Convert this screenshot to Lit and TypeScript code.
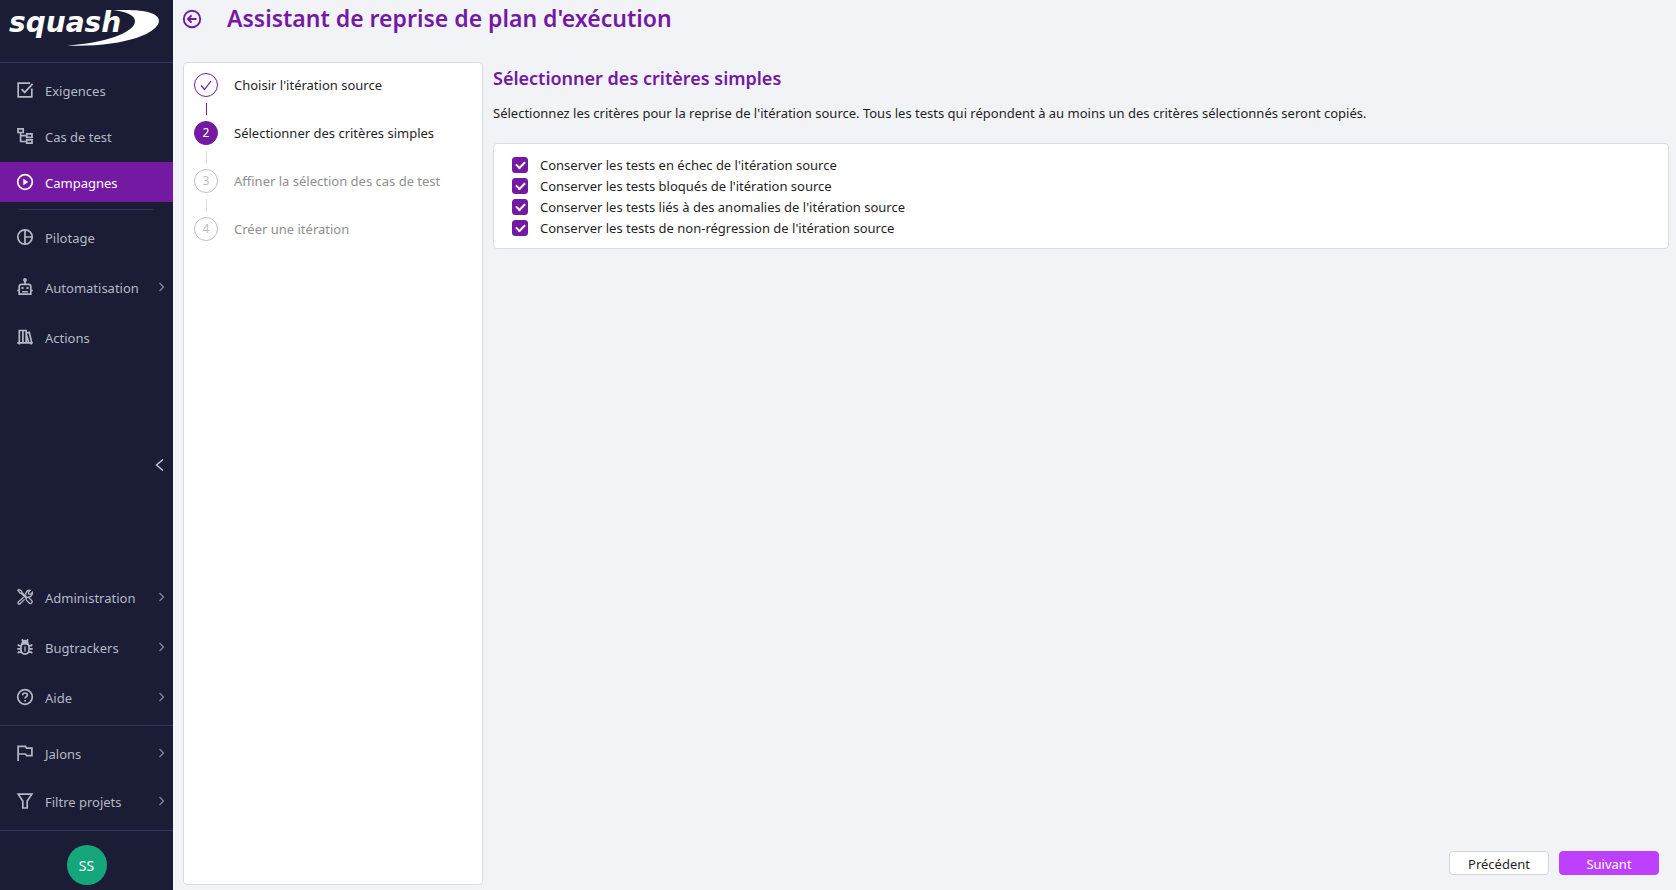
import { LitElement, html, css, svg, nothing, TemplateResult } from "lit";
import { customElement, property, state } from "lit/decorators.js";

const icons: Record<string, TemplateResult> = {
  check: svg`<path d="M13.2 1.2H1.2V14.8H14.8V6.5M4.6 7.2l3 3.2L15.6 1.8"/>`,
  tree: svg`<path d="M1 .9h5.2v3.6H1zM9.700 5.900H15v3.400H9.700zM9.700 11.800H15v3.400H9.700zM3.600 4.500v9h6M3.600 7.700h6"/>`,
  play: svg`<circle cx="8" cy="8" r="7.300"/><path d="M6.300 4.800v6.400L11.300 8z" fill="currentColor" stroke="none"/>`,
  pie: svg`<circle cx="8" cy="8" r="7.200"/><path d="M8 .8v14.400M8 8h7.200"/>`,
  robot: svg`<path d="M8 1v4.500M4.500 5.300h7a2.300 2.300 0 0 1 2.300 2.300v7.600H2.200V7.600a2.300 2.300 0 0 1 2.300-2.300zM2 11.500H.2M14 11.500h1.800"/><circle cx="8" cy="1" r="1.100" fill="currentColor"/><path d="M4.500 8h2v2h-2zM9.500 8h2v2h-2zM5.200 12h5.600v1.500H5.200z" fill="currentColor" stroke="none"/>`,
  books: svg`<path d="M2.300 15.500V1.500h3.600v12.300M5.900 1.500h3.300v12.300M.2 13.800h15.600M9.200 4.200l3.100-.8 2.400 10.200M9.500 6l2.200 7.600M14 13.800v1.700"/>`,
  tools: svg`<g stroke-width="1.300"><path d="M.8 1.200L2 .4l2.400 1.500.5 1.600 5 5c.9-.3 1.700-.1 2.400.6l2.400 2.400c1.600 1.600-.9 4.200-2.500 2.500L9.800 11.600c-.7-.7-.9-1.500-.6-2.300l-5-5-1.600-.6z"/><path d="M8.800 6.300C8.200 3.300 10.300.8 13.300 1.300L11.300 3.400l.4 1.600 1.600.4 2.100-2.100c.4 2.900-1.700 4.700-4 4.400M6.700 8.300L1.500 12.700c-1.600 1.500.4 3.500 1.800 1.800L7.600 10.400"/></g>`,
  bug: svg`<path d="M4 8c0-2.300 1.500-3.300 4-3.300s4 1 4 3.300v2.800c0 2.600-1.500 4.300-4 4.300s-4-1.700-4-4.300zM.3 9.800H4M12 9.800h3.700M.9 5.400l.8 1.200H4M15.100 5.400l-.8 1.200H12M.9 14.400l.8-1.300h2.700M15.100 14.400l-.8-1.300h-2.700"/><path d="M8 7.500v5" stroke-width="1.300"/><path d="M5.200 4.400a2.800 2.800 0 0 1 5.600 0zM4.800.4l1.700 1.800M11.200.4L9.500 2.200" fill="currentColor"/>`,
  help: svg`<circle cx="8" cy="8" r="7.300"/><path d="M5.700 6.300c0-3 4.700-3 4.700-.2 0 1.700-2.300 1.700-2.300 3.500M8.100 10.900v1.600"/>`,
  flag: svg`<path d="M1.100 16V1.300h7.400l1 1.800h5.400v7.600H9.600L8.500 9H1.100"/>`,
  filter: svg`<path d="M1.200 1.200h13.600L10.200 8v7H5.800V8z"/>`,
  back: svg`<circle cx="8" cy="8" r="7.300"/><path d="M12 8H4.500M7.600 4.800L4.400 8l3.200 3.200"/>`,
};

@customElement("sq-icon")
class SqIcon extends LitElement {
  @property() name = "";
  static styles = css`
    :host { display: inline-flex; flex: none; width: 16px; height: 16px; }
    svg { width: 100%; height: 100%; overflow: visible; fill: none; stroke: currentColor; stroke-width: 1.700; }
  `;
  render() {
    return html`<svg viewBox="0 0 16 16" aria-hidden="true">${icons[this.name]}</svg>`;
  }
}

interface NavItem { icon: string; label: string; more?: boolean; active?: boolean }

@customElement("sq-sidebar")
class SqSidebar extends LitElement {
  static styles = css`
    :host {
      display: flex; flex-direction: column; flex: none; box-sizing: border-box;
      width: 173px; min-height: 100vh; background: #1a1d35; color: #b5b8c6;
    }
    .logo { display: block; height: 62px; border-bottom: 1px solid #323759; }
    .logo svg { display: block; width: 173px; height: 62px; }
    .word { font: italic bold 28px "DejaVu Sans", sans-serif; }
    nav { display: flex; flex-direction: column; }
    .main { gap: 6px; padding-top: 7px; }
    .tools { gap: 10px; padding-top: 7px; }
    .admin { gap: 10px; padding-bottom: 8px; }
    .filters { gap: 8px; padding: 7px 0 9px; border: solid #323759; border-width: 1px 0; }
    .item {
      display: flex; align-items: center; box-sizing: border-box; height: 40px;
      padding: 0 8px 0 17px; gap: 12px; color: inherit; text-decoration: none;
    }
    .item.active { background: #7419a2; color: #fff; }
    .label { flex: 1; padding-top: 2px; }
    .chevron { width: 7px; height: 10px; fill: none; stroke: currentColor; stroke-width: 1.200; opacity: 0.700; }
    .rule { width: 134px; height: 1px; margin: 7px 0 0 19px; border: 0; background: #323759; }
    .middle { display: flex; flex: 1; align-items: center; justify-content: flex-end; padding-bottom: 4px; }
    .collapse { display: flex; padding: 8px 9px; border: 0; background: none; color: #c9cbd6; }
    .collapse svg { width: 9px; height: 12px; fill: none; stroke: currentColor; stroke-width: 1.400; }
    .avatar {
      align-self: center; width: 40px; height: 40px; margin: 14px 0 5px; padding: 2px 0 0;
      border: 0; border-radius: 50%; background: #16a67c; color: #fff; font: inherit; font-size: 14px;
    }
  `;
  private item(i: NavItem) {
    return html`<a class="item ${i.active ? "active" : ""}" href="#">
      <sq-icon name=${i.icon}></sq-icon><span class="label">${i.label}</span>
      ${i.more ? html`<svg class="chevron" viewBox="0 0 7 10" aria-hidden="true"><path d="M1.500 1l4 4-4 4"/></svg>` : nothing}
    </a>`;
  }
  render() {
    return html`
      <a class="logo" href="#" aria-label="squash">
        <svg viewBox="0 0 173 62">
          <text class="word" x="9" y="32" fill="#fff">squash</text>
          <path fill="#fff" d="M113 10.200C142 8.800 159 12 159 21C158 34 122 47.500 67 45.500C103 43.500 135 33 135 21C135 15 125 11 113 10.200z"/>
        </svg>
      </a>
      <nav class="main">
        ${[
          { icon: "check", label: "Exigences" },
          { icon: "tree", label: "Cas de test" },
          { icon: "play", label: "Campagnes", active: true },
        ].map((i) => this.item(i))}
      </nav>
      <hr class="rule" />
      <nav class="tools">
        ${[
          { icon: "pie", label: "Pilotage" },
          { icon: "robot", label: "Automatisation", more: true },
          { icon: "books", label: "Actions" },
        ].map((i) => this.item(i))}
      </nav>
      <div class="middle">
        <button class="collapse" aria-label="Replier le menu">
          <svg viewBox="0 0 9 12"><path d="M8 .5L1.500 6 8 11.500"/></svg>
        </button>
      </div>
      <nav class="admin">
        ${[
          { icon: "tools", label: "Administration", more: true },
          { icon: "bug", label: "Bugtrackers", more: true },
          { icon: "help", label: "Aide", more: true },
        ].map((i) => this.item(i))}
      </nav>
      <nav class="filters">
        ${[
          { icon: "flag", label: "Jalons", more: true },
          { icon: "filter", label: "Filtre projets", more: true },
        ].map((i) => this.item(i))}
      </nav>
      <button class="avatar">SS</button>
    `;
  }
}

@customElement("sq-steps")
class SqSteps extends LitElement {
  @property({ attribute: false }) steps: string[] = [];
  @property({ type: Number }) current = 0;
  static styles = css`
    ol { display: flex; flex-direction: column; gap: 24px; margin: 0; padding: 0; list-style: none; }
    li { position: relative; display: flex; align-items: center; gap: 16px; height: 24px; color: #1f1f1f; }
    li:not(:last-child)::after {
      content: ""; position: absolute; left: 12px; top: 30px; width: 1px; height: 12px; background: #dcdcdc;
    }
    li.done:not(:last-child)::after { background: #7419a2; }
    .dot {
      display: flex; align-items: center; justify-content: center; box-sizing: border-box;
      width: 24px; height: 24px; border: 1px solid #c0c0c0; border-radius: 50%; font-size: 12px; color: #c0c0c0;
    }
    .dot svg { width: 12px; height: 12px; fill: none; stroke: currentColor; stroke-width: 1.200; }
    .done .dot { border-color: #7419a2; color: #7419a2; }
    .current .dot { border-color: #7419a2; background: #7419a2; color: #fff; }
    .todo { color: #8f8f8f; }
  `;
  render() {
    return html`<ol>
      ${this.steps.map((label, i) => {
        const status = i < this.current ? "done" : i === this.current ? "current" : "todo";
        return html`<li class=${status}>
          <span class="dot">${status === "done"
            ? html`<svg viewBox="0 0 12 12" aria-hidden="true"><path d="M1 6.500l3.500 4L11 2"/></svg>`
            : i + 1}</span>
          <span>${label}</span>
        </li>`;
      })}
    </ol>`;
  }
}

@customElement("app-root")
class AppRoot extends LitElement {
  @state() private criteria = [
    { label: "Conserver les tests en échec de l'itération source", checked: true },
    { label: "Conserver les tests bloqués de l'itération source", checked: true },
    { label: "Conserver les tests liés à des anomalies de l'itération source", checked: true },
    { label: "Conserver les tests de non-régression de l'itération source", checked: true },
  ];
  private steps = [
    "Choisir l'itération source",
    "Sélectionner des critères simples",
    "Affiner la sélection des cas de test",
    "Créer une itération",
  ];
  static styles = css`
    :host {
      display: flex; min-height: 100vh; background: #f2f3f7; color: #1f1f1f;
      font: 13px/20px "Noto Sans", sans-serif;
    }
    .page { display: flex; flex: 1; flex-direction: column; min-width: 0; }
    header { display: flex; align-items: center; gap: 26px; height: 38px; margin-bottom: 24px; padding-left: 10px; }
    .back { display: flex; padding: 0; border: 0; background: none; color: #7419a2; }
    .back sq-icon { width: 18px; height: 18px; }
    h1, h2 { margin: 0; color: #7419a2; font-weight: 600; }
    h1 { font-size: 23px; line-height: 36px; padding-bottom: 2px; }
    h2 { font-size: 18px; line-height: 28px; }
    .body { display: flex; flex: 1; gap: 10px; padding: 0 7px 5px 10px; }
    .card { box-sizing: border-box; border: 1px solid #d9dde6; border-radius: 4px; background: #fff; }
    .wizard { flex: none; width: 300px; padding: 10px; }
    .content { display: flex; flex: 1; flex-direction: column; min-width: 0; padding-top: 2px; }
    p { margin: 11px 0 20px; }
    .criteria { display: flex; flex-direction: column; gap: 1px; padding: 11px 18px 10px; }
    .criterion { display: flex; align-items: center; gap: 12px; }
    input {
      appearance: none; display: grid; place-items: center; width: 16px; height: 16px; margin: 0;
      border: 1px solid #c0c0c0; border-radius: 3px; background: #fff;
    }
    input:checked { border-color: #7419a2; background: #7419a2; }
    input:checked::after {
      content: ""; box-sizing: border-box; width: 9px; height: 6px; margin-bottom: 2px;
      border: solid #fff; border-width: 0 0 2px 2px; transform: rotate(-45deg);
    }
    footer { display: flex; justify-content: flex-end; gap: 10px; margin-top: auto; padding: 0 10px 10px 0; }
    .btn {
      box-sizing: border-box; width: 100px; height: 24px; padding: 1px 0 0; border: 1px solid #d5d5d9;
      border-radius: 4px; background: #fff; color: inherit; font: inherit;
    }
    .btn.primary { border-color: #bd40ff; background: #bd40ff; color: #fff; }
  `;
  private toggle(index: number) {
    this.criteria = this.criteria.map((c, i) => (i === index ? { ...c, checked: !c.checked } : c));
  }
  render() {
    return html`
      <sq-sidebar></sq-sidebar>
      <main class="page">
        <header>
          <button class="back" aria-label="Retour"><sq-icon name="back"></sq-icon></button>
          <h1>Assistant de reprise de plan d'exécution</h1>
        </header>
        <div class="body">
          <section class="card wizard"><sq-steps .steps=${this.steps} .current=${1}></sq-steps></section>
          <section class="content">
            <h2>Sélectionner des critères simples</h2>
            <p>Sélectionnez les critères pour la reprise de l'itération source. Tous les tests qui répondent à au moins un des critères sélectionnés seront copiés.</p>
            <div class="card criteria">
              ${this.criteria.map((c, i) => html`<label class="criterion">
                <input type="checkbox" .checked=${c.checked} @change=${() => this.toggle(i)} />${c.label}
              </label>`)}
            </div>
            <footer>
              <button class="btn">Précédent</button>
              <button class="btn primary">Suivant</button>
            </footer>
          </section>
        </div>
      </main>
    `;
  }
}
